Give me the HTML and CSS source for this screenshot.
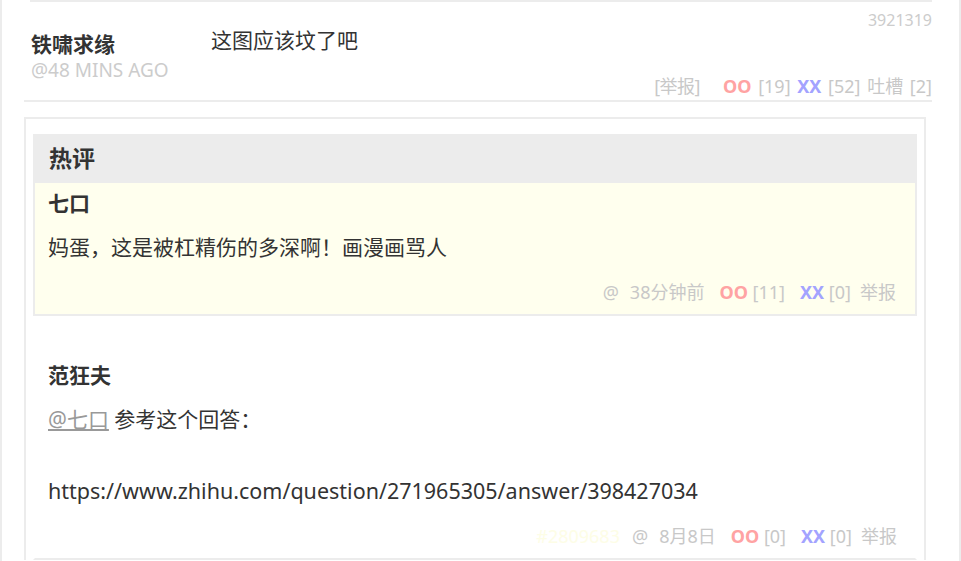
FILE: index.html
```html
<!DOCTYPE html>
<html lang="zh-CN">
<head>
<meta charset="utf-8">
<title>吐槽</title>
<link rel="stylesheet" href="styles.css">
</head>
<body>
<div class="page">
  <div class="prev-end"></div>
  <div class="post">
    <div class="author">
      <div class="author-name">铁啸求缘</div>
      <div class="author-time">@48 MINS AGO</div>
    </div>
    <div class="post-body">
      <div class="post-id">3921319</div>
      <div class="post-text">这图应该坟了吧</div>
      <div class="post-meta"><span class="report">[举报]</span><span class="oo">OO</span> [19] <span class="xx">XX</span> [52] 吐槽 [2]</div>
    </div>
  </div>
  <div class="tucao">
    <div class="hot-title">热评</div>
    <div class="comment hot">
      <div class="c-name">七口</div>
      <div class="c-text">妈蛋，这是被杠精伤的多深啊！画漫画骂人</div>
      <div class="c-meta"><span class="at">@</span><span class="when">38分钟前</span><span class="oo">OO</span> [11]<span class="xx">XX</span> [0]<span class="rep">举报</span></div>
    </div>
    <div class="comment">
      <div class="c-name">范狂夫</div>
      <div class="c-text"><a class="mention" href="#">@七口</a> 参考这个回答：<br><br><span class="url">https://www.zhihu.com/question/271965305/answer/398427034</span></div>
      <div class="c-meta"><span class="cid">#2809683</span><span class="at">@</span><span class="when">8月8日</span><span class="oo">OO</span> [0]<span class="xx">XX</span> [0]<span class="rep">举报</span></div>
    </div>
  </div>
</div>
</body>
</html>
```

FILE: styles.css
```css
* { box-sizing: border-box; }
html, body { margin: 0; padding: 0; background: #fff; }
body {
  font-family: "Noto Sans", "Noto Sans CJK SC", sans-serif;
  color: #333;
}
.page {
  width: 961px;
  min-height: 561px;
  border-left: 2px solid #ececec;
  border-right: 2px solid #ececec;
  overflow: hidden;
}
.prev-end {
  height: 2px;
  background: #ececec;
  margin: 0 27px 0 28px;
}
.post {
  display: flex;
  margin: 0 27px 0 22px;
  padding: 0 0 2px 7px;
  border-bottom: 2px solid #ececec;
}
.author {
  width: 180px;
  flex: none;
  padding-top: 31px;
}
.author-name {
  font-family: "Liberation Sans", "Noto Sans CJK SC", sans-serif;
  font-size: 21px;
  font-weight: bold;
  line-height: 24px;
  color: #333;
}
.author-time {
  font-size: 19px;
  line-height: 26px;
  color: #ccc;
}
.post-body {
  flex: 1;
  padding-top: 8px;
}
.post-id {
  text-align: right;
  font-size: 16px;
  line-height: 20px;
  color: #ccc;
}
.post-text {
  font-size: 21px;
  line-height: 20px;
}
.post-meta {
  margin-top: 24px;
  text-align: right;
  font-size: 18px;
  line-height: 24px;
  color: #c8c8c8;
  white-space: nowrap;
  word-spacing: 2px;
}
.report { margin-right: 23px; letter-spacing: -0.5px; }
.oo { color: #ffa3a3; font-weight: bold; }
.xx { color: #a3a3ff; font-weight: bold; }
.tucao {
  margin: 15px 33px 0 22px;
  border: 2px solid #ececec;
  border-bottom: none;
  padding: 15px 7px 0;
}
.hot-title {
  height: 49px;
  line-height: 49px;
  padding-left: 16px;
  background: #ececec;
  font-size: 23px;
  font-weight: bold;
}
.comment {
  border: 2px solid transparent;
  border-top: none;
  border-bottom-color: #ececec;
  padding: 47px 18px 10px 13px;
}
.comment.hot {
  background: #ffffee;
  border-left-color: #ececec;
  border-right-color: #ececec;
  padding-top: 8px;
  padding-right: 19px;
}
.c-name {
  font-size: 21px;
  font-weight: bold;
  line-height: 24px;
}
.c-text {
  margin-top: 14px;
  font-size: 21px;
  line-height: 36px;
}
.url { font-size: 21.5px; }
.mention { color: #999; text-decoration: underline; }
.c-meta {
  margin-top: 15px;
  text-align: right;
  font-size: 18px;
  line-height: 24px;
  color: #c8c8c8;
  white-space: nowrap;
}
.c-meta .oo, .c-meta .xx { margin-left: 15px; }
.at { margin-right: 11px; }
.rep { margin-left: 9px; }
.cid { color: #fdfde6; margin-right: 12px; }
```
